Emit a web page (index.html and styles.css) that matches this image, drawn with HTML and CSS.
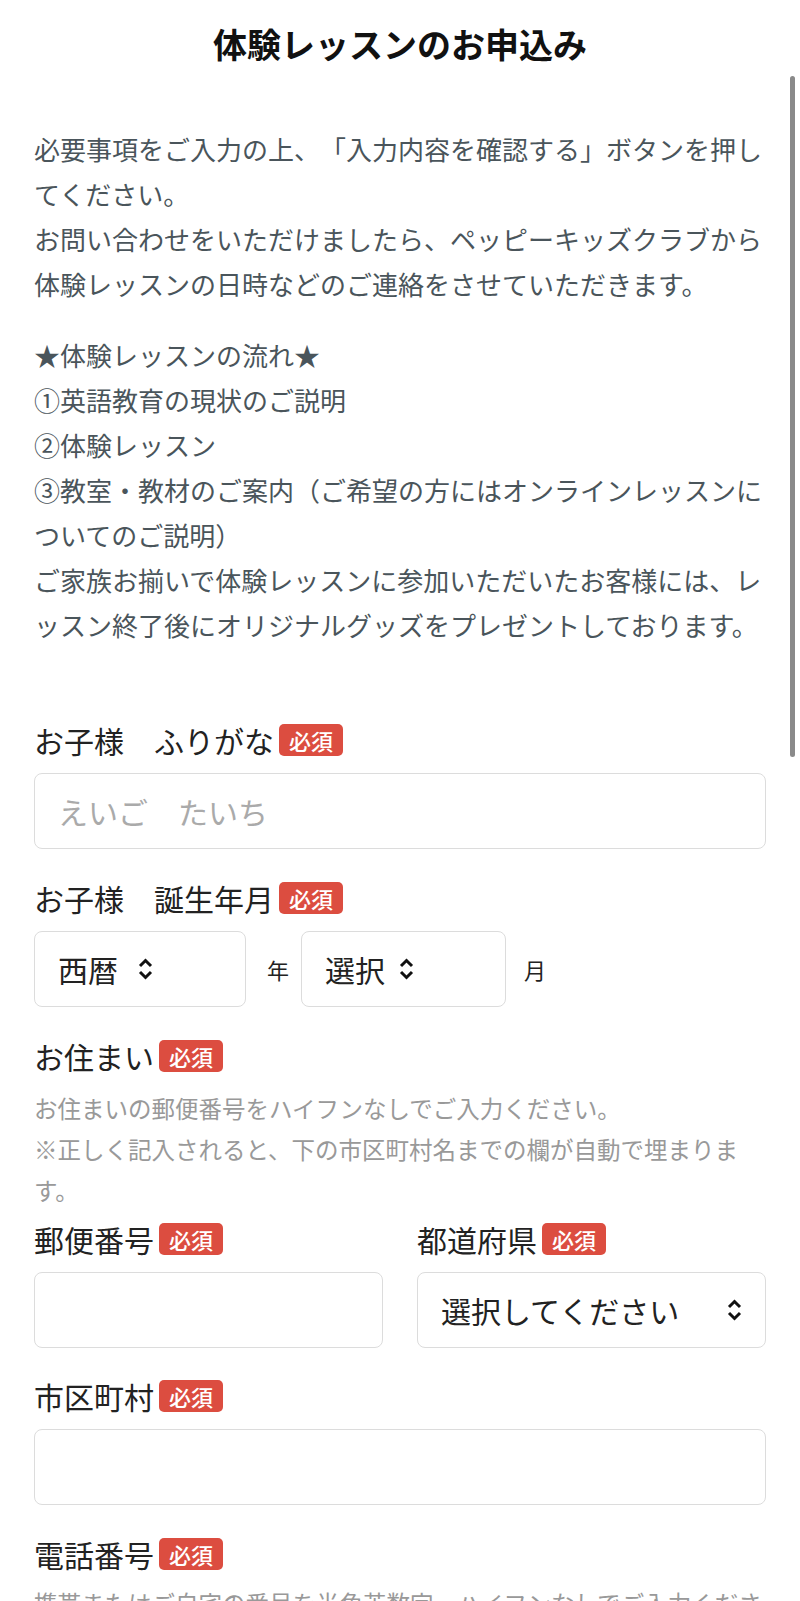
FILE: index.html
```html
<!DOCTYPE html>
<html lang="ja">
<head>
<meta charset="utf-8">
<title>体験レッスンのお申込み</title>
<link rel="stylesheet" href="styles.css">
</head>
<body>
<header class="header"><h1 class="title">体験レッスンのお申込み</h1></header>
<main class="content">
  <section class="intro">
    <p>必要事項をご入力の上、「入力内容を確認する」ボタンを押してください。<br>お問い合わせをいただけましたら、ペッピーキッズクラブから体験レッスンの日時などのご連絡をさせていただきます。</p>
    <p>★体験レッスンの流れ★<br>①英語教育の現状のご説明<br>②体験レッスン<br>③教室・教材のご案内（ご希望の方にはオンラインレッスンについてのご説明）<br>ご家族お揃いで体験レッスンに参加いただいたお客様には、レッスン終了後にオリジナルグッズをプレゼントしております。</p>
  </section>
  <form class="form">
    <div class="field field-first">
      <div class="label">お子様　ふりがな<span class="badge">必須</span></div>
      <input class="input" type="text" placeholder="えいご　たいち">
    </div>
    <div class="field">
      <div class="label">お子様　誕生年月<span class="badge">必須</span></div>
      <div class="date-row">
        <div class="select select-year"><span>西暦</span><svg class="chev" viewBox="0 0 15 24" width="15" height="24"><path d="M2 9 L7.5 3.5 L13 9 M2 15 L7.5 20.5 L13 15"/></svg></div>
        <span class="unit unit-year">年</span>
        <div class="select select-month"><span>選択</span><svg class="chev" viewBox="0 0 15 24" width="15" height="24"><path d="M2 9 L7.5 3.5 L13 9 M2 15 L7.5 20.5 L13 15"/></svg></div>
        <span class="unit unit-month">月</span>
      </div>
    </div>
    <div class="field">
      <div class="label">お住まい<span class="badge">必須</span></div>
      <p class="hint">お住まいの郵便番号をハイフンなしでご入力ください。<br>※正しく記入されると、下の市区町村名までの欄が自動で埋まります。</p>
    </div>
    <div class="field field-tight two-col">
      <div class="col">
        <div class="label">郵便番号<span class="badge">必須</span></div>
        <input class="input" type="text">
      </div>
      <div class="col">
        <div class="label">都道府県<span class="badge">必須</span></div>
        <div class="select select-pref"><span>選択してください</span><svg class="chev" viewBox="0 0 15 24" width="15" height="24"><path d="M2 9 L7.5 3.5 L13 9 M2 15 L7.5 20.5 L13 15"/></svg></div>
      </div>
    </div>
    <div class="field field-city">
      <div class="label">市区町村<span class="badge">必須</span></div>
      <input class="input" type="text">
    </div>
    <div class="field">
      <div class="label">電話番号<span class="badge">必須</span></div>
      <p class="hint hint-phone">携帯またはご自宅の番号を半角英数字、ハイフンなしでご入力ください。</p>
    </div>
  </form>
</main>
<div class="scrollbar"></div>
</body>
</html>
```

FILE: styles.css
```css
* {
  box-sizing: border-box;
  margin: 0;
  padding: 0;
}

html, body {
  width: 800px;
  overflow: hidden;
}

body {
  font-family: "Noto Sans CJK JP", "Noto Sans", sans-serif;
  color: #222;
  background: #fff;
  text-spacing-trim: space-all;
}

.header {
  height: 88px;
  display: flex;
  align-items: center;
  justify-content: center;
}

.title {
  font-size: 34px;
  font-weight: 700;
  line-height: 1;
  color: #111;
}

.content {
  padding: 0 34px;
}

.intro {
  padding-top: 38px;
  color: #4a555b;
  font-size: 26px;
  line-height: 45px;
}

.intro p + p {
  margin-top: 26px;
}

.form {
  display: flex;
  flex-direction: column;
}

.field {
  margin-top: 26px;
}

.field-first {
  margin-top: 70px;
}

.field-tight {
  margin-top: 5px;
}

.field-city {
  margin-top: 25px;
}

.label {
  display: flex;
  align-items: center;
  font-size: 30px;
  line-height: 46px;
  color: #222;
}

.badge {
  margin-left: 5px;
  background: #dc4d40;
  color: #fff;
  font-size: 22px;
  line-height: 32px;
  padding: 0 10px;
  border-radius: 5px;
  font-weight: 500;
}

.input {
  display: block;
  width: 100%;
  margin-top: 10px;
  height: 76px;
  border: 1.5px solid #dcdcdc;
  border-radius: 8px;
  padding: 0 23px;
  font-family: inherit;
  font-size: 30px;
  color: #222;
  background: #fff;
  outline: none;
}

.input::placeholder {
  color: #aaa;
}

.date-row {
  margin-top: 10px;
  display: flex;
  align-items: center;
}

.select {
  height: 76px;
  border: 1.5px solid #dcdcdc;
  border-radius: 8px;
  display: flex;
  align-items: center;
  padding: 0 23px;
  font-size: 30px;
  color: #222;
  background: #fff;
}

.chev {
  flex: none;
}

.chev path {
  fill: none;
  stroke: #111;
  stroke-width: 3;
  stroke-linejoin: miter;
}

.select-year {
  width: 212px;
  gap: 20px;
}

.select-month {
  width: 205px;
  gap: 14px;
}

.unit {
  font-size: 22px;
  color: #222;
}

.unit-year {
  margin: 0 12px 0 21px;
}

.unit-month {
  margin-left: 18px;
}

.hint {
  margin-top: 9px;
  font-size: 23.5px;
  line-height: 41px;
  color: #999;
}

.hint-phone {
  margin-top: 6px;
}

.two-col {
  display: grid;
  grid-template-columns: 1fr 1fr;
  column-gap: 34px;
}

.select-pref {
  margin-top: 10px;
  justify-content: space-between;
  padding-right: 23px;
}

.scrollbar {
  position: fixed;
  right: 5px;
  top: 76px;
  width: 5px;
  height: 681px;
  border-radius: 3px;
  background: #8a8a8a;
}
```
